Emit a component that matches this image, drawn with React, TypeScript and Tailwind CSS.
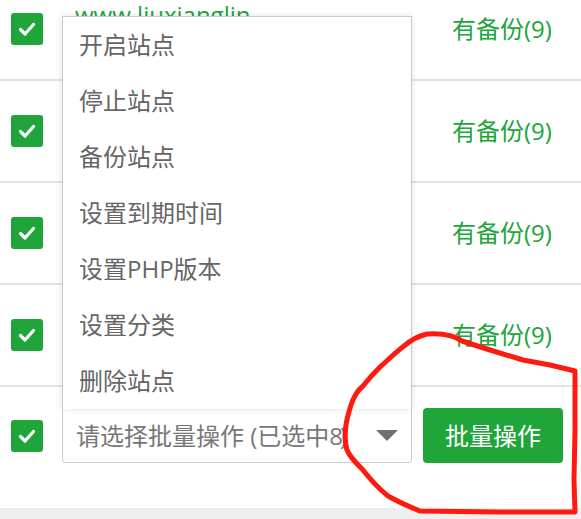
import React from 'react';

const font = "font-['Open_Sans','Noto_Sans_CJK_SC',sans-serif]";

const menuItems = ['开启站点', '停止站点', '备份站点', '设置到期时间', '设置PHP版本', '设置分类', '删除站点'];

const CheckBox: React.FC = () => (
  <div className="w-8 h-8 rounded-[3px] bg-[#20a53a] flex items-center justify-center shrink-0">
    <svg width="20" height="20" viewBox="0 0 20 20">
      <path d="M3.5 10.5 L8 15 L16.5 5.5" fill="none" stroke="#fff" strokeWidth="3.2" strokeLinecap="round" strokeLinejoin="round" />
    </svg>
  </div>
);

const SiteRow: React.FC<{ name?: string }> = ({ name }) => (
  <div className="h-[102px] border-b-2 border-[#e2e2e2] flex items-center">
    <div className="pl-[11px] w-[75px] shrink-0">
      <CheckBox />
    </div>
    <div className="flex-1 self-start pt-[22px]">
      {name && <span className="text-[24px] leading-[28px] text-[#20a53a]">{name}</span>}
    </div>
    <div className="w-[129px] shrink-0 text-[24px] leading-[28px] text-[#20a53a]">有备份(9)</div>
  </div>
);

const App: React.FC = () => {
  return (
    <div className={`relative w-[581px] h-[519px] overflow-hidden bg-white ${font}`}>
      <div className="mt-[-21px]">
        <SiteRow name="www.liuxianglin" />
        <SiteRow />
        <SiteRow />
        <SiteRow />
        <div className="h-[121px] flex items-start pt-[21px]">
          <div className="pl-[11px] w-[62px] shrink-0 h-[55px] flex items-center">
            <CheckBox />
          </div>
          <div className="relative w-[350px] h-[55px] border border-[#cccccc] rounded-b-[3px] bg-white flex items-center pl-[13px] pr-[13px]">
            <div className="absolute left-[-1px] right-[-1px] bottom-full border border-b-0 border-[#cccccc] bg-white shadow-[0_0_6px_rgba(0,0,0,0.12)] flex flex-col">
              {menuItems.map((item) => (
                <div key={item} className="h-[56px] flex items-center pl-[16px] text-[24px] text-[#666666]">
                  {item}
                </div>
              ))}
            </div>
            <span className="flex-1 text-[24px] text-[#777777] whitespace-nowrap">
              请选择批量操作 (已选中8<span className="ml-[-3px]">)</span>
            </span>
            <svg width="22" height="11" viewBox="0 0 22 11" className="ml-[8px] shrink-0">
              <path d="M0 0 L22 0 L11 11 Z" fill="#707070" />
            </svg>
          </div>
          <button className="ml-[11px] w-[140px] h-[55px] rounded-[4px] bg-[#20a53a] text-white text-[24px] flex items-center justify-center">
            批量操作
          </button>
        </div>
      </div>
      <div className="h-[11px] bg-[#efefef]" />
      <svg className="absolute inset-0 pointer-events-none" width="581" height="519" viewBox="0 0 581 519">
        <path
          d="M427,334 C440,333 452,334 462,341 L490,350 L523,360 L550,365 L575,371 L575,430 L574,480 L575,512 L500,512 L420,511 C405,505 395,500 388,496 C378,488 370,479 363,470 C355,462 350,457 347,450 C344,440 345,433 346,425 C347,418 349,412 351,405 C354,396 358,390 363,386 C370,377 375,372 380,367 C388,360 396,352 404,346 C411,340 418,336 427,334 Z"
          fill="none"
          stroke="#ff1a10"
          strokeWidth="5"
          strokeLinejoin="round"
          strokeLinecap="round"
        />
      </svg>
    </div>
  );
};

export default App;
